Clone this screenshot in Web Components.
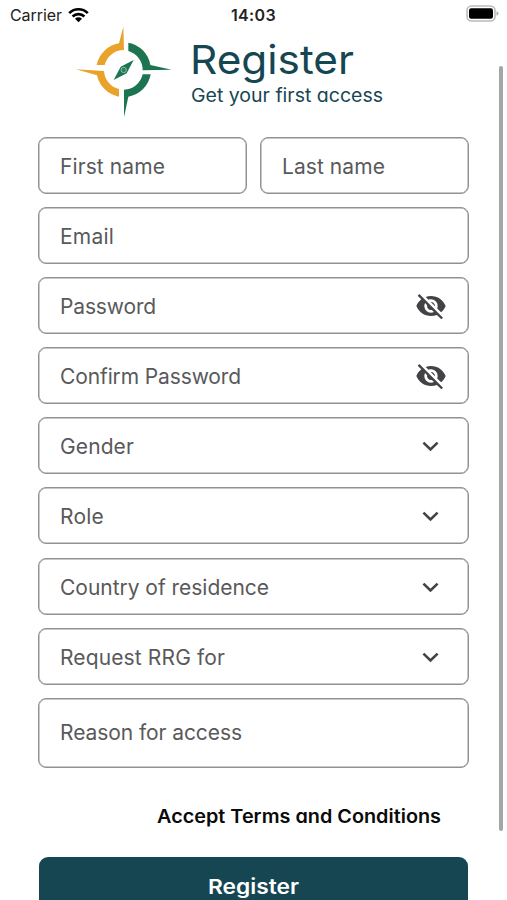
<!DOCTYPE html>
<html lang="en">
<head>
<meta charset="utf-8">
<title>Register</title>
<style>
html, body { margin: 0; height: 900px; overflow: hidden; background: #fff; }
body { font-family: Inter, "Liberation Sans", sans-serif; }
</style>
</head>
<body>
<register-screen></register-screen>
<script>
const define = (name, html, setup) => customElements.define(name, class extends HTMLElement {
  connectedCallback() {
    if (this.shadowRoot) return;
    const t = document.createElement('template');
    t.innerHTML = html;
    this.attachShadow({ mode: 'open' }).append(t.content.cloneNode(true));
    if (setup) setup(this, this.shadowRoot);
  }
});

// Text set to a given width: by tracking, or by widening the letters when "stretch" is set.
define('fit-text', `<style>
:host { display: inline-block; white-space: nowrap; }
span { display: inline-block; transform-origin: 0 50%; }
</style><span><slot></slot></span>`, (el, root) => {
  const span = root.querySelector('span');
  const target = +el.getAttribute('width');
  const w = span.getBoundingClientRect().width;
  if (el.hasAttribute('stretch')) {
    el.style.width = target + 'px';
    span.style.transform = `scaleX(${target / w})`;
  } else {
    span.style.letterSpacing = ((target - w) / el.textContent.length) + 'px';
  }
});

define('status-bar', `<style>
:host { display: grid; grid-template-columns: 1fr auto 1fr; align-items: center; height: 29px; padding: 0 8px 0 10px; box-sizing: border-box; color: #222; font-size: 16px; }
.left { display: flex; align-items: center; gap: 6px; }
.time { font-weight: 600; margin-right: 2px; }
.battery { justify-self: end; display: block; margin-top: -2px; }
</style>
<div class="left"><fit-text width="52">Carrier</fit-text>
<svg width="21" height="16" viewBox="0 0 21 16"><g fill="none" stroke="#000" stroke-width="2.7"><path d="M1.2 6.1A13.2 13.2 0 0 1 19.8 6.1"/><path d="M4.6 9.5A8.4 8.4 0 0 1 16.4 9.5"/></g><path d="M10.5 15.2L7 11.7A5 5 0 0 1 14 11.7Z"/></svg></div>
<div class="time"><fit-text width="45">14:03</fit-text></div>
<svg class="battery" width="33" height="17" viewBox="0 0 33 17"><rect x="1" y="1" width="28" height="15" rx="4.5" fill="#fff" stroke="#bbb" stroke-width="1.6"/><rect x="3" y="3.2" width="24" height="10.6" rx="2.2"/><path d="M30.5 6.2Q32.5 7 32.5 8.5T30.5 10.8Z" fill="#aaa"/></svg>`);

define('compass-logo', `<style>:host { display: block; width: 110px; height: 105px; } svg { display: block; }</style>
<svg width="110" height="105" viewBox="0 0 330 315">
<g fill="#e9a32b"><path d="M160 20L162 90A59 59 0 0 0 104 135L80 135A82 82 0 0 1 147 70Z"/><path d="M18 148L102 153A59 59 0 0 0 147 207L147 230A82 82 0 0 1 81 166Z"/></g>
<g fill="#1c7450"><path d="M175 68A82 82 0 0 1 241 135L305 149L218 151A59 59 0 0 0 175 93Z"/><path d="M162 209A59 59 0 0 0 218 163L242 163A82 82 0 0 1 175 230L162 292Z"/><path d="M191 120L170 160L131 180L152 140Z"/></g>
<circle cx="161" cy="150" r="8" fill="#2c7d5c" stroke="#8dbba6" stroke-width="3"/></svg>`);

define('page-header', `<style>
:host { display: flex; height: 108px; padding: 0 0 0 70px; box-sizing: border-box; color: #154652; }
compass-logo { margin-top: -9px; }
.titles { padding: 7px 0 0 11px; font-feature-settings: "cv11"; }
fit-text { display: block; }
.title { font-size: 40px; line-height: 48px; font-weight: 400; margin-left: -1px; }
.sub { font-size: 18.500px; line-height: 23px; }
</style><compass-logo></compass-logo>
<div class="titles"><fit-text class="title" stretch width="164">Register</fit-text><fit-text class="sub" stretch width="192">Get your first access</fit-text></div>`);

define('eye-off-icon', `<style>:host { display: block; margin-top: -2px; } svg { display: block; }</style>
<svg width="32" height="32" viewBox="0 0 24 24" fill="#434347"><path d="M12 7c2.760 0 5 2.240 5 5 0 .650-.130 1.260-.360 1.830l2.920 2.920c1.510-1.260 2.700-2.890 3.430-4.750-1.730-4.390-6-7.500-11-7.500-1.400 0-2.740.250-3.980.700l2.160 2.160C10.740 7.130 11.350 7 12 7zM2 4.270l2.280 2.280.460.460C3.080 8.300 1.780 10.020 1 12c1.730 4.390 6 7.500 11 7.500 1.550 0 3.030-.300 4.380-.840l.420.420L19.730 22 21 20.730 3.270 3 2 4.270zM7.530 9.800l1.550 1.550c-.050.210-.080.430-.080.650 0 1.660 1.340 3 3 3 .220 0 .440-.030.650-.080l1.550 1.550c-.670.330-1.410.530-2.200.530-2.760 0-5-2.240-5-5 0-.790.200-1.530.530-2.200zm4.310-.780l3.150 3.150.020-.160c0-1.660-1.340-3-3-3l-.170.010z"/></svg>`);

define('chevron-icon', `<style>:host { display: block; margin-top: -2px; } svg { display: block; }</style>
<svg width="32" height="32" viewBox="0 0 32 32"><path d="M8.400 12.600L15.500 19.500L22.600 12.600" fill="none" stroke="#434347" stroke-width="2.600"/></svg>`);

define('form-field', `<style>
:host { display: flex; align-items: center; justify-content: space-between; box-sizing: border-box; height: 57px; padding: 3px 21px 0 21px; border: 1px solid #929294; border-radius: 8px; color: #59595c; font-size: 21px; line-height: 28px; box-shadow: inset 0 0 0 .5px #929294; }
:host([tall]) { height: 70px; padding-top: 1px; }
</style><slot></slot><slot name="icon"></slot>`);

define('primary-button', `<style>
:host { display: flex; box-sizing: border-box; justify-content: center; height: 60px; padding-top: 15px; border-radius: 9px; background: #154652; color: #fff; font-size: 20.500px; line-height: 29px; font-weight: 600; }
</style><slot></slot>`);

define('scroll-thumb', `<style>:host { position: absolute; left: 498.500px; top: 66px; width: 4.500px; height: 765px; border-radius: 3px; background: #a5a5a5; }</style>`);

define('register-screen', `<style>
:host { display: block; position: relative; width: 507px; height: 900px; overflow: hidden; background: #fff; }
form { display: flex; flex-direction: column; gap: 13.100px; padding: 0 38px; }
.names { display: grid; grid-template-columns: 1fr 1fr; gap: 13px; }
.terms { align-self: flex-end; margin: 21.500px 28px 0 0; color: #0a0a0a; font-size: 18.500px; line-height: 28px; height: 28px; font-weight: 600; font-feature-settings: "cv11"; }
primary-button { margin: 13.500px 1px 0; }
</style>
<status-bar></status-bar>
<page-header></page-header>
<form>
<div class="names"><form-field><fit-text width="105">First name</fit-text></form-field><form-field><fit-text width="103">Last name</fit-text></form-field></div>
<form-field><fit-text width="54">Email</fit-text></form-field>
<form-field><fit-text width="96">Password</fit-text><eye-off-icon slot="icon"></eye-off-icon></form-field>
<form-field><fit-text width="181">Confirm Password</fit-text><eye-off-icon slot="icon"></eye-off-icon></form-field>
<form-field><fit-text width="74">Gender</fit-text><chevron-icon slot="icon"></chevron-icon></form-field>
<form-field><fit-text width="44">Role</fit-text><chevron-icon slot="icon"></chevron-icon></form-field>
<form-field><fit-text width="209">Country of residence</fit-text><chevron-icon slot="icon"></chevron-icon></form-field>
<form-field><fit-text width="165">Request RRG for</fit-text><chevron-icon slot="icon"></chevron-icon></form-field>
<form-field tall><fit-text width="182">Reason for access</fit-text></form-field>
<div class="terms"><fit-text stretch width="284">Accept Terms and Conditions</fit-text></div>
<primary-button><fit-text stretch width="91">Register</fit-text></primary-button>
</form>
<scroll-thumb></scroll-thumb>`);
</script>
</body>
</html>
